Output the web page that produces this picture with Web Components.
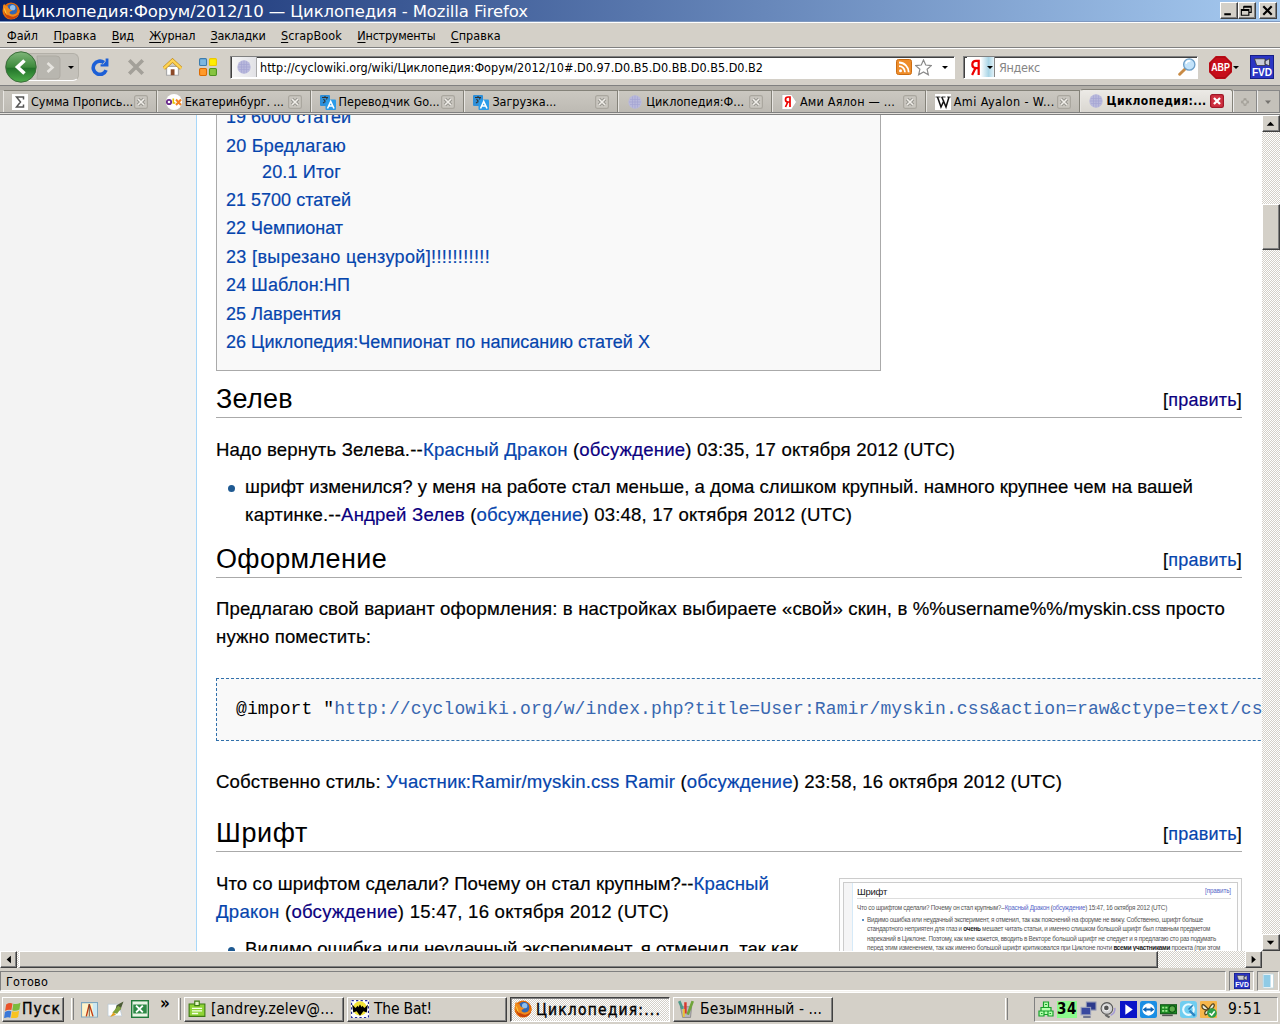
<!DOCTYPE html>
<html lang="ru">
<head>
<meta charset="utf-8">
<title>Циклопедия:Форум/2012/10 — Циклопедия</title>
<style>
  body {
    margin: 0;
    width: 1280px;
    height: 1024px;
    overflow: hidden;
    background: #d4d0c8;
    font: 12.5px "DejaVu Sans Condensed", "DejaVu Sans", "Noto Sans", sans-serif;
    color: #000;
  }
</style>
</head>
<body>
<browser-window>
  <title-bar slot="title"></title-bar>
  <menu-bar slot="menu"></menu-bar>
  <nav-bar slot="nav"></nav-bar>
  <tab-strip slot="tabs">
    <browser-tab icon="sigma" w="102">Сумма Пропись...</browser-tab>
    <browser-tab icon="olx" w="99">Екатеринбург. ...</browser-tab>
    <browser-tab icon="translate" w="101">Переводчик Go...</browser-tab>
    <browser-tab icon="translate" w="64">Загрузка...</browser-tab>
    <browser-tab icon="globe" w="98">Циклопедия:Ф...</browser-tab>
    <browser-tab icon="yandex" w="95">Ами Аялон — ...</browser-tab>
    <browser-tab icon="wiki" w="101">Ami Ayalon - W...</browser-tab>
    <browser-tab icon="globe" w="100" active>Циклопедия:...</browser-tab>
  </tab-strip>
  <wiki-page slot="page"></wiki-page>
  <status-bar slot="status"></status-bar>
</browser-window>
<task-bar></task-bar>

<script>
const ICONS = {
  firefox: `<circle cx="8" cy="8" r="7.6" fill="#e66a00"/><circle cx="8.6" cy="6.6" r="5" fill="#3367b4"/><circle cx="9.5" cy="5" r="2.4" fill="#8fc0ee"/><path d="M1 3C0 10 4 15.4 9 15.2 13 15 16 12 15.6 6.500 14.500 10 12 11.500 9 11 6.500 10.500 6 9 8 8.200L9.400 7.400C7 7 5 5.500 5 3.500 3.600 4 2.500 3.500 2 1.500Z" fill="#f08a1c"/><path d="M2 6C3 10 6 13 10 13 13 12.700 15 11 15.500 8 15.500 12 12 15.400 8 15.200 4 15 1.500 11 2 6Z" fill="#c8420a"/><path d="M2 5C4 8 3 10 6 12 3 11 1.600 8 2 5Z" fill="#ffd33c"/>`,
  reload: `<path d="M13.400 10.800A5.900 5.900 0 1 1 11.500 4" fill="none" stroke="#1c5fd6" stroke-width="3.200"/><path d="M8.500 7.500H15.500V.5H13V3L11 5.500H8.500Z" fill="#1c5fd6"/>`,
  stop: `<path d="M2 2L14 14M14 2L2 14" stroke="#a3a099" stroke-width="3.200"/>`,
  home: `<path d="M3 7H13V14.500H3Z" fill="#fff" stroke="#a9a9a9"/><path d="M.7 8.800L8 2 15.300 8.800" fill="none" stroke="#c08a18" stroke-width="3"/><path d="M.7 8.800L8 2 15.300 8.800" fill="none" stroke="#ffd452" stroke-width="2.100"/><path d="M6.500 9.500H9.700V14.500H6.500Z" fill="#8c4a28"/>`,
  blocks: `<g stroke-width="1"><rect x=".5" y=".5" width="6.200" height="6.200" rx="1" fill="#7db7e0" stroke="#3c7cae"/><rect x="9.300" y=".5" width="6.200" height="6.200" rx="1" fill="#ffee00" stroke="#ecc800"/><rect x=".5" y="9.300" width="6.200" height="6.200" rx="1" fill="#ff9a2a" stroke="#dd6b00"/><rect x="9.300" y="9.300" width="6.200" height="6.200" rx="1" fill="#86c440" stroke="#4e9320"/></g>`,
  globe: `<circle cx="8" cy="8" r="6.700" fill="#b9b9dc"/><path d="M3 5.500H13M2 8H14M3 10.500H13M5.500 2.500V13.500M8 1.500V14.500M10.500 2.500V13.500" stroke="#a5a5d2" stroke-width=".7"/>`,
  rss: `<rect x=".5" y=".5" width="15" height="15" rx="2" fill="#ee8d2b" stroke="#cc6d12"/><circle cx="4.500" cy="11.700" r="1.500" fill="#fff"/><path d="M3 7.200A6 6 0 0 1 9 13.200M3 3.500A9.700 9.700 0 0 1 12.700 13.200" fill="none" stroke="#fff" stroke-width="1.800"/>`,
  star: `<path d="M8 .9L10.100 5.700 15.400 6.200 11.400 9.700 12.600 14.900 8 12.200 3.400 14.900 4.600 9.700 .6 6.200 5.900 5.700Z" fill="#fff" stroke="#8a8a8a" stroke-width="1.100"/>`,
  lens: `<path d="M1.500 14.500L6.500 9.500" stroke="#c98b45" stroke-width="2.600" stroke-linecap="round"/><circle cx="10" cy="5.800" r="5" fill="#c3e3fa" stroke="#6d9fc8" stroke-width="1.200"/><path d="M7 5A3.500 3.500 0 0 1 11 2.700" fill="none" stroke="#fff" stroke-width="1.500"/>`,
  abp: `<path d="M4.700 0H11.300L16 4.700V11.300L11.300 16H4.700L0 11.300V4.700Z" fill="#c70d1a"/><path d="M5 .8H11L15.200 5V11L11 15.200H5L.8 11V5Z" fill="none" stroke="#8d0a10" stroke-width=".5"/><text x="8" y="10.600" font-size="7" font-weight="700" text-anchor="middle" fill="#fff" textLength="13" lengthAdjust="spacingAndGlyphs">ABP</text>`,
  fvd: `<rect width="16" height="16" fill="#2b35c4"/><rect x=".3" y=".3" width="15.400" height="15.400" fill="none" stroke="#151c80" stroke-width=".6"/><path d="M3 2.500H10V7H4.500ZM10 4L13 2.500V7.300L10 6Z" fill="#c9cbd6" stroke="#333" stroke-width=".5"/><text x="8" y="14.300" font-size="7" font-weight="700" text-anchor="middle" fill="#fff" textLength="13.500" lengthAdjust="spacingAndGlyphs">FVD</text>`,
  sigma: `<rect width="16" height="16" fill="#fff"/><path d="M11.500 5.500V3H4.500L8.500 8 4.500 13H11.500V10.500" fill="none" stroke="#555" stroke-width="1.500"/>`,
  olx: `<circle cx="8" cy="8" r="8" fill="#fff"/><circle cx="3" cy="8" r="2.200" fill="none" stroke="#6a2a8c" stroke-width="1.800"/><path d="M7.300 4.500V9H9.300" fill="none" stroke="#e8c400" stroke-width="1.600"/><path d="M10 5.500L15 11M15 5.500L10 11" stroke="#f58220" stroke-width="2"/>`,
  translate: `<rect x="0" y="1" width="10" height="11" rx="1" fill="#2f8fd8"/><path d="M2 3.500H8M5 2V3.500M3 9Q7 7 7 3.500M3.500 5Q5 8 8 9" stroke="#333" stroke-width="1.100" fill="none"/><rect x="5.500" y="5.500" width="10.500" height="10.500" rx="1" fill="#2a9be8"/><path d="M7.500 14.500L10.700 7.500 14 14.500M8.800 12H12.700" stroke="#fff" stroke-width="1.600" fill="none"/>`,
  yandex: `<path d="M1 .5H10.500L15.500 8 10.500 15.500H1Z" fill="#fff" stroke="#b5b5b5" stroke-width=".7"/><path d="M9 13V3H7Q4.500 3 4.500 5.700 4.500 8 7 8H9M6.800 8L4.500 13" fill="none" stroke="#e00" stroke-width="1.700"/>`,
  ya: `<path d="M11 15V1.700H8.500Q5 1.700 5 5.400 5 8.500 8.500 8.500H11M8 8.500L4.800 15" fill="none" stroke="#e00" stroke-width="2.100"/>`,
  wiki: `<rect width="16" height="16" fill="#fff"/><path d="M.5 3H5.500M6.500 3H10.500M12 3H15.800" stroke="#111" stroke-width=".8"/><path d="M2.500 3L6 13 9 6.500M6.800 3L11 13 14 3" fill="none" stroke="#111" stroke-width="1.500"/>`,
  close: `<rect x=".7" y=".7" width="14.600" height="14.600" rx="2" fill="#c9c6bf" stroke="#aaa79f" stroke-width="1.400"/><path d="M4.500 4.500L11.500 11.500M11.500 4.500L4.500 11.500" stroke="#989690" stroke-width="4"/><path d="M4.500 4.500L11.500 11.500M11.500 4.500L4.500 11.500" stroke="#f0eee9" stroke-width="1.800"/>`,
  closered: `<rect x=".7" y=".7" width="14.600" height="14.600" rx="2" fill="#d03040" stroke="#a01828" stroke-width="1.400"/><path d="M4.500 4.500L11.500 11.500M11.500 4.500L4.500 11.500" stroke="#fff" stroke-width="2.600"/>`,
  windows: `<g transform="skewY(-8) translate(0 1.500)"><path d="M2 2Q5 .5 8 2L7 8Q4 6.500 1 8Z" fill="#e9532a"/><path d="M8.800 2.300Q12 3.800 15.500 2.300L14.500 8.500Q11 10 7.800 8.300Z" fill="#7bbb3c"/><path d="M.9 9Q4 7.500 6.900 9L5.900 15Q3 13.500 0 15Z" fill="#3b78d8"/><path d="M7.600 9.300Q11 11 14.300 9.500L13.300 15.500Q10 17 6.600 15.300Z" fill="#f8c320"/></g>`,
  arrows: `<path d="M.5 1.500H15.500V15H.5Z" fill="#fff3c8" stroke="#7ea6bf"/><path d="M11 2H15V14.500H11Z" fill="#cbe8f4"/><path d="M7.800 3L5 14.500M7.800 3L11.300 14.500" stroke="#c23b14" stroke-width="1.300" fill="none"/><path d="M7.800 3V14.500" stroke="#444" stroke-width=".8"/>`,
  brush: `<path d="M1 3H11L14 14H1Z" fill="#fff" stroke="#b3c7d8" stroke-width=".6"/><path d="M15.500 .5L9 4 7.500 10 12.500 8.500Z" fill="#4b5a35"/><path d="M10.500 4.500L5 11 9.500 12 13.500 6.500Z" fill="#7da03c"/><path d="M6 10.500L3 15 8.500 13Z" fill="#e0a020"/>`,
  excel: `<rect x=".6" y=".6" width="14.800" height="14.800" fill="#e8f4e4" stroke="#1f7a3a" stroke-width="1.300"/><path d="M2 4H14V12H2Z" fill="#2d8a46"/><path d="M4.500 5L10.500 11M10.500 5L4.500 11" stroke="#fff" stroke-width="1.700"/>`,
  note: `<path d="M1 3.500H15V14.500H1Z" fill="#8fd436" stroke="#3c7a12"/><path d="M6 1H10V5H6Z" fill="#e7f7c8" stroke="#3c7a12"/><path d="M3.500 7.500H12.500M3.500 9.700H12.500M3.500 12H9" stroke="#f8ffea" stroke-width="1.200"/>`,
  bat: `<rect width="16" height="16" fill="#fff"/><rect x=".5" y=".5" width="15" height="15" fill="none" stroke="#222c9a" stroke-dasharray="2 2"/><circle cx="8" cy="7.500" r="6.300" fill="#f2e33a"/><path d="M1 4L4 7 6 5 7 6.500 7.500 4 8 5 8.500 4 9 6.500 10 5 12 7 15 4 14 11 11 10 8 14 5 10 2 11Z" fill="#000"/>`,
  paint: `<path d="M3 6H13L12 15.500H5Z" fill="#b8b5c0" stroke="#777" stroke-width=".6"/><path d="M5 8L2 1" stroke="#4a9a8a" stroke-width="2.400"/><path d="M7.500 12V2" stroke="#d8392f" stroke-width="2.200"/><path d="M9.500 13L14 1" stroke="#6fa43a" stroke-width="2.400"/><path d="M6 15L6 8" stroke="#e8c636" stroke-width="1.800"/>`,
  clover: `<path d="M5.500 1H10.500V6.500H5.500ZM3 6.500H13V10H3ZM1 10H6V15H1ZM6 10H10V13.500H6ZM10 10H15V15H10Z" fill="#b6ffae" stroke="#17a02a" stroke-width="1.200"/><path d="M7 3.500H9M3 12.500H4.500M11.500 12.500H13" stroke="#17a02a"/>`,
  network: `<rect x="6" y="1" width="9" height="7.500" fill="#2c3a8c" stroke="#8c93b3"/><rect x="1" y="6" width="9" height="7" fill="#39499f" stroke="#9aa0bd"/><path d="M3 15H10" stroke="#6f7590" stroke-width="2"/>`,
  speaker: `<circle cx="6.500" cy="7" r="5.500" fill="#d0d0d0" stroke="#555"/><circle cx="6" cy="6.500" r="2.700" fill="#555" stroke="#eee"/><path d="M10 13.500Q14.500 11.500 14 6.500" stroke="#a59bd6" fill="none" stroke-width="1.500"/><path d="M5 13L9 15.500" stroke="#666" stroke-width="2"/>`,
  play: `<rect width="16" height="16" fill="#0a14c8"/><path d="M5 3L12 8 5 13Z" fill="#fff"/>`,
  teamviewer: `<rect width="16" height="16" rx="2" fill="#1b8ee4"/><circle cx="8" cy="8" r="5.800" fill="#fff"/><path d="M2.500 8L6 5.300V7H10V5.300L13.500 8 10 10.700V9H6V10.700Z" fill="#0d62b5"/>`,
  card: `<path d="M0 3.500H16V12H0Z" fill="#1c8b22" stroke="#0a4e10"/><path d="M2 5.500H4V7H2ZM5 5.500H7V7H5ZM2 8.500H4V10H2ZM5 8.500H7V10H5Z" fill="#a0e890"/><path d="M2 13.500H12" stroke="#555" stroke-width="1.500"/><circle cx="11.500" cy="7.500" r="3" fill="#5fae4d" stroke="#0a4e10"/>`,
  quicktime: `<rect width="16" height="16" rx="3" fill="#6fcdf0"/><circle cx="8" cy="8" r="5" fill="none" stroke="#eafaff" stroke-width="2"/><path d="M9 9L14 14" stroke="#2e86c4" stroke-width="2.300"/><path d="M8 8L12 4" stroke="#287bb4" stroke-width="1.500"/>`,
  butterfly: `<rect width="16" height="16" rx="1" fill="#f6b64a"/><path d="M8 8Q1 0 2 6 3 9 8 8Q12 0 13.500 4 13 8 8 8Q3 10 5 13 8 13 8 8" fill="#e8efe0" stroke="#544319" stroke-width="1.200"/><circle cx="11.300" cy="11.300" r="4.500" fill="#2ca04a"/><path d="M9 11.500L11 13.300 13.800 9.600" stroke="#fff" stroke-width="1.500" fill="none"/>`,
  page: `<path d="M3 1H13.500V15H3Z" fill="#fff" stroke="#bcd4dc" stroke-width=".8"/><path d="M3.500 2H10.500V14H3.500Z" fill="#8fcbe6"/>`,
  up: `<path d="M4 10.500L8 6 12 10.500Z"/>`,
  down: `<path d="M4 6L8 10.500 12 6Z"/>`,
  left: `<path d="M10.500 4L6 8 10.500 12Z"/>`,
  right: `<path d="M6 4L10.500 8 6 12Z"/>`,
  min: `<path d="M3.500 12H10.500" stroke="#000" stroke-width="2.200"/>`,
  restore: `<path d="M5 3.500H13V10H11M5 3.500V6M5 4.500H13M2.500 7H10.500V13H2.500ZM2.500 8H10.500" fill="none" stroke="#000" stroke-width="1.200"/>`,
  exit: `<path d="M3.500 3.500L12.500 12.500M12.500 3.500L3.500 12.500" stroke="#000" stroke-width="2.300"/>`,
  plus: `<path d="M8 4V12M4 8H12" stroke="#8b8880" stroke-width="3"/><path d="M8 5V11M5 8H11" stroke="#dedbd4" stroke-width="1.200"/>`,
};

const BEVEL = `
  box-sizing: border-box;
  background: #d4d0c8;
  border: 1px solid;
  border-color: #fff #404040 #404040 #fff;
  box-shadow: inset -1px -1px #808080;
`;
const DITHER = "background: repeating-conic-gradient(#fff 0 25%, #d4d0c8 0 50%) 0 0 / 2px 2px;";

class ShadowElement extends HTMLElement {
  connectedCallback() {
    if (this.shadowRoot) return;
    this.attachShadow({ mode: "open" });
    this.shadowRoot.innerHTML = this.render();
  }
}

class PixIcon extends ShadowElement {
  render() {
    const size = this.getAttribute("size") || 16;
    return `
      <style>
        :host { display: block; flex: none; width: ${size}px; height: ${size}px; }
        svg { display: block; }
        text { font-family: "Liberation Sans", sans-serif; }
      </style>
      <svg width="${size}" height="${size}" viewBox="0 0 16 16">${ICONS[this.getAttribute("name")]}</svg>
    `;
  }
}

// one line of text, spaced out to take exactly w pixels
class FitText extends ShadowElement {
  connectedCallback() {
    super.connectedCallback();
    const w = Number(this.getAttribute("w"));
    const nodes = this.shadowRoot.querySelector("slot").assignedNodes({ flatten: true });
    const count = nodes.map((n) => n.textContent).join("").length;
    this.style.width = "max-content";
    const natural = this.getBoundingClientRect().width;
    this.style.letterSpacing = (w - natural) / count + "px";
    this.style.width = w + "px";
  }

  render() {
    return `<style>:host { display: inline-block; white-space: pre; flex: none; }</style><slot></slot>`;
  }
}

class BrowserWindow extends ShadowElement {
  render() {
    return `
      <style>
        :host { display: flex; flex-direction: column; height: 992px; }
      </style>
      <slot name="title"></slot>
      <slot name="menu"></slot>
      <slot name="nav"></slot>
      <slot name="tabs"></slot>
      <slot name="page"></slot>
      <slot name="status"></slot>
    `;
  }
}

class TitleBar extends ShadowElement {
  render() {
    return `
      <style>
        :host {
          display: flex; align-items: center; height: 22px; box-sizing: border-box;
          padding: 0 3px 0 2px; color: #fff; font-family: "DejaVu Sans", sans-serif; font-size: 16.500px;
          background: linear-gradient(90deg, #0a246a, #a6caf0);
          border-bottom: 1px solid #8099c0;
        }
        fit-text { margin-left: 2px; line-height: 20px; padding-top: 2px; }
        .buttons { display: flex; margin-left: auto; }
        .buttons div { width: 18px; height: 17px; ${BEVEL} }
        .buttons div:last-child { margin-left: 3px; }
      </style>
      <pix-icon name="firefox" size="18"></pix-icon>
      <fit-text w="506">Циклопедия:Форум/2012/10 — Циклопедия - Mozilla Firefox</fit-text>
      <div class="buttons">
        <div><pix-icon name="min" size="15"></pix-icon></div>
        <div><pix-icon name="restore" size="15"></pix-icon></div>
        <div><pix-icon name="exit" size="15"></pix-icon></div>
      </div>
    `;
  }
}

class MenuBar extends ShadowElement {
  render() {
    const items = [["Файл", 31], ["Правка", 43], ["Вид", 22], ["Журнал", 46], ["Закладки", 55], ["ScrapBook", 61], ["Инструменты", 78], ["Справка", 50]];
    return `
      <style>
        :host {
          display: flex; align-items: center; gap: 15.400px; height: 26px; box-sizing: border-box;
          padding-left: 7px; border-top: 1px solid #fff; border-bottom: 1px solid #808080;
        }
        u { text-underline-offset: 2px; text-decoration-thickness: 1px; }
      </style>
      ${items.map(([t, w]) => `<fit-text w="${w}"><u>${t[0]}</u>${t.slice(1)}</fit-text>`).join("")}
    `;
  }
}

class NavBar extends ShadowElement {
  render() {
    return `
      <style>
        :host {
          display: flex; align-items: center; height: 38px; box-sizing: border-box;
          border-top: 1px solid #fff; border-bottom: 1px solid #808080; padding-left: 5px;
        }
        .history {
          display: flex; align-items: center; width: 74px; height: 28px; box-sizing: border-box;
          background: #c4c1ba; border-radius: 14px 6px 6px 14px;
          border: 1px solid #b3b0a8; border-bottom-color: #fff; margin-right: 12px;
        }
        .back { flex: none; margin-left: -1px; }
        .fwd { flex: none; margin-left: -3px; }
        .arrow { border: 3px solid transparent; border-top: 3px solid #000; border-bottom: 0; flex: none; }
        .history .arrow { margin-left: 7px; }
        .field {
          display: flex; align-items: center; height: 23px; box-sizing: border-box; background: #fff;
          border: 1px solid; border-color: #808080 #fff #fff #808080; box-shadow: inset 1px 1px #404040;
        }
        .url { width: 725px; margin-left: 13px; padding-left: 1px; }
        .ident {
          display: flex; align-items: center; padding: 0 4px; height: 20px;
          background: linear-gradient(90deg, #f6f6f6, #e2e2e6); border-right: 1px solid #aaa; margin-right: 3px;
        }
        .url .arrow { margin: 0 6px 0 auto; }
        .rss { margin-left: 133px; margin-right: 3px; }
        .search { width: 235px; margin-left: 8px; padding-left: 3px; color: #858585; }
        .engine { display: flex; align-items: center; height: 20px; width: 27px; border-right: 1px solid #888; background: linear-gradient(90deg, #fff 50%, #a9d5e6 80%, #e3f2f8); margin-right: 4px; }
        .search > pix-icon { margin: 0 1px 0 auto; }
        .abp { margin: 0 1px 0 11px; }
        .fvd { margin-left: 11px; }
      </style>
      <div class="history">
        <svg class="back" width="32" height="32" viewBox="0 0 32 32">
          <defs><linearGradient id="g" x1="0" y1="0" x2="0" y2="1"><stop offset="0" stop-color="#7fb67a"/><stop offset=".5" stop-color="#3d8a3c"/><stop offset=".55" stop-color="#23742a"/><stop offset="1" stop-color="#4fae4c"/></linearGradient></defs>
          <circle cx="16" cy="16" r="15.200" fill="url(#g)" stroke="#3c6e3b"/>
          <path d="M19.500 9.500L12.500 16 19.500 22.500" fill="none" stroke="#fff" stroke-width="3.600"/>
        </svg>
        <svg class="fwd" width="27" height="25" viewBox="0 0 27 25">
          <path d="M3 1H22Q26 1 26 4V21Q26 24 22 24H3Q5 12 3 1Z" fill="#b8b6af" stroke="#aeaba3"/>
          <path d="M13.500 8L18.500 12.500 13.500 17" fill="none" stroke="#e6e4df" stroke-width="2.600"/>
        </svg>
        <div class="arrow"></div>
      </div>
      <pix-icon name="reload" size="18"></pix-icon>
      <pix-icon name="stop" size="18" style="margin-left: 18px"></pix-icon>
      <pix-icon name="home" size="19" style="margin-left: 18px"></pix-icon>
      <pix-icon name="blocks" size="18" style="margin-left: 17px"></pix-icon>
      <div class="field url">
        <div class="ident"><pix-icon name="globe" size="16"></pix-icon></div>
        <fit-text w="503">http://cyclowiki.org/wiki/Циклопедия:Форум/2012/10#.D0.97.D0.B5.D0.BB.D0.B5.D0.B2</fit-text>
        <pix-icon class="rss" name="rss"></pix-icon>
        <pix-icon name="star" size="17"></pix-icon>
        <div class="arrow"></div>
      </div>
      <div class="field search">
        <div class="engine"><pix-icon name="ya" size="17"></pix-icon><div class="arrow" style="margin-left: 3px"></div></div>
        <fit-text w="41">Яндекс</fit-text>
        <pix-icon name="lens" size="18"></pix-icon>
      </div>
      <pix-icon class="abp" name="abp" size="23"></pix-icon>
      <div class="arrow"></div>
      <pix-icon class="fvd" name="fvd" size="24"></pix-icon>
    `;
  }
}

class TabStrip extends ShadowElement {
  render() {
    return `
      <style>
        :host {
          display: flex; align-items: flex-end; height: 29px; box-sizing: border-box;
          padding: 0 0 2px 3px; background: linear-gradient(#b1aea7 4px, #bbb8b1 4px);
          border-bottom: 1px solid #808080; box-shadow: inset 0 -1px #e4e1dc, inset 0 -2px #808080;
          overflow: hidden;
        }
        div {
          display: flex; align-items: center; justify-content: center; width: 30px; height: 22px; box-sizing: border-box;
          background: #c4c1ba; border-left: 1px solid #eee; border-top: 1px solid #888; border-right: 1px solid #888;
        }
      </style>
      <slot></slot>
      <div><pix-icon name="plus" size="14"></pix-icon></div>
      <div><pix-icon name="down" size="12" style="opacity: .4"></pix-icon></div>
    `;
  }
}

class BrowserTab extends ShadowElement {
  render() {
    const active = this.hasAttribute("active");
    return `
      <style>
        :host {
          display: flex; align-items: center; flex: none; width: 153.800px; height: 22px; box-sizing: border-box;
          padding-left: 8px; background: linear-gradient(#cbc8c1, #bdbab3);
          border-top: 1px solid #848279; border-left: 1px solid #e8e6e2; border-right: 1px solid #848279;
        }
        :host([active]) { height: 23px; background: linear-gradient(#eceae6, #dad7d1); font-weight: bold; border-radius: 3px 3px 0 0; font-size: 12px; padding-left: 7px; }
        fit-text { margin-left: 3px; }
        .close { margin: 0 8px 0 auto; }
      </style>
      <pix-icon name="${this.getAttribute("icon")}"></pix-icon>
      <fit-text w="${this.getAttribute("w")}"><slot></slot></fit-text>
      <pix-icon class="close" name="${active ? "closered" : "close"}" size="14"></pix-icon>
    `;
  }
}

class WikiHeading extends ShadowElement {
  render() {
    return `
      <style>
        :host {
          display: flex; align-items: flex-end; justify-content: space-between; font-size: 18px;
          width: 1026px; height: 37px; box-sizing: border-box; border-bottom: 1px solid #aaa;
        }
        .text { font-size: 27px; line-height: 36px; -webkit-text-stroke: 0; }
        .edit { line-height: 28px; padding-bottom: 3.500px; }
        a { color: ${this.hasAttribute("visited") ? "#0b0080" : "#0645ad"}; }
      </style>
      <fit-text class="text" w="${this.getAttribute("w")}"><slot></slot></fit-text>
      <fit-text class="edit" w="79">[<a>править</a>]</fit-text>
    `;
  }
}

class WikiToc extends ShadowElement {
  render() {
    const rows = [["19 6000 статей", 125], ["20 Бредлагаю", 120], ["20.1 Итог", 79, true], ["21 5700 статей", 125], ["22 Чемпионат", 117], ["23 [вырезано цензурой]!!!!!!!!!!!", 264], ["24 Шаблон:НП", 124], ["25 Лаврентия", 115], ["26 Циклопедия:Чемпионат по написанию статей X", 424]];
    return `
      <style>
        :host {
          display: flex; flex-direction: column; width: 665px; box-sizing: border-box; height: 283px; font-size: 18px;
          margin-top: -27px; padding: 14.200px 0 0 9px; background: #f9f9f9; border: 1px solid #aaa; color: #0645ad;
        }
        div { height: 28.400px; line-height: 28.400px; }
        .sub { padding-left: 36px; height: 26px; line-height: 25px; }
      </style>
      ${rows.map(([t, w, sub]) => `<div class="${sub ? "sub" : ""}"><fit-text w="${w}">${t}</fit-text></div>`).join("")}
    `;
  }
}

class WikiThumb extends ShadowElement {
  render() {
    return `
      <style>
        :host {
          display: block; flex: none; width: 403px; height: 110px; box-sizing: border-box;
          padding: 3px; background: #fdfdfd; border: 1px solid #ccc;
          font-size: 6.300px; line-height: 9.400px; color: #555; -webkit-text-stroke: 0;
        }
        .shot { display: flex; box-sizing: border-box; height: 110px; border: 1px solid #ccc; background: #fff; }
        .side { flex: none; width: 8px; background: #f5f5f6; border-right: 1px solid #d6eaf8; }
        .main { padding: 3px 0 0 4px; }
        .head { display: flex; justify-content: space-between; width: 374px; height: 12px; border-bottom: 1px solid #ddd; }
        .head fit-text:first-child { font-size: 9.500px; color: #222; line-height: 11px; }
        .line { margin: 4px 0 2.500px; height: 9.400px; line-height: 9.400px; }
        .line fit-text { display: block; }
        .list { display: flex; flex-direction: column; padding-left: 10px; }
        .bullet { display: flex; align-items: center; gap: 3px; margin-left: -5px; }
        .bullet::before { content: ""; width: 2px; height: 2px; background: #2a6db0; border-radius: 1px; }
        .list fit-text { height: 9.400px; }
        a { color: #5566c8; }
        b { color: #222; }
      </style>
      <div class="shot">
        <div class="side"></div>
        <div class="main">
          <div class="head"><fit-text w="30">Шрифт</fit-text><fit-text w="26"><a>[править]</a></fit-text></div>
          <div class="line"><fit-text w="310">Что со шрифтом сделали? Почему он стал крупным?--<a>Красный Дракон</a> (<a>обсуждение</a>) 15:47, 16 октября 2012 (UTC)</fit-text></div>
          <div class="list">
            <div class="bullet"><fit-text w="336">Видимо ошибка или неудачный эксперимент, я отменил, так как пояснений на форуме не вижу. Собственно, шрифт больше</fit-text></div>
            <fit-text w="343">стандартного неприятен для глаз и <b>очень</b> мешает читать статьи, и именно слишком большой шрифт был главным предметом</fit-text>
            <fit-text w="349">нареканий в Циклоне. Поэтому, как мне кажется, вводить в Векторе большой шрифт не следует и я предлагаю сто раз подумать</fit-text>
            <fit-text w="353">перед этим изменением, так как именно большой шрифт критиковался при Циклоне почти <b>всеми участниками</b> проекта (при этом</fit-text>
          </div>
        </div>
      </div>
    `;
  }
}

class ScrollBar extends ShadowElement {
  render() {
    const vertical = this.hasAttribute("vertical");
    const before = this.getAttribute("before");
    const thumb = this.getAttribute("thumb");
    return `
      <style>
        :host { display: flex; flex: none; flex-direction: ${vertical ? "column" : "row"}; ${DITHER} }
        div { ${BEVEL} flex: none; width: 17px; height: 17px; ${vertical ? "width: 18px;" : ""} }
        .thumb { ${vertical ? `margin-top: ${before}px; height: ${thumb}px` : `margin-left: ${before}px; width: ${thumb}px`}; }
        .end { ${vertical ? "margin-top" : "margin-left"}: auto; }
      </style>
      <div><pix-icon name="${vertical ? "up" : "left"}" size="15"></pix-icon></div>
      <div class="thumb"></div>
      <div class="end"><pix-icon name="${vertical ? "down" : "right"}" size="15"></pix-icon></div>
    `;
  }
}

class WikiPage extends ShadowElement {
  render() {
    return `
      <style>
        :host { display: grid; grid-template: 836px 17px / 1262px 18px; }
        .view {
          display: flex; overflow: hidden; background: #fff; -webkit-text-stroke: .2px;
          font-family: "Liberation Sans", Arial, sans-serif; font-size: 18.600px; line-height: 28px;
        }
        .side { flex: none; width: 196px; background: #f3f3f3; border-right: 1px solid #a7d7f9; }
        .content { flex: none; width: 1046px; padding-left: 19px; }
        p { margin: 0; height: 28px; }
        p fit-text, li fit-text { display: block; }
        ul { margin: 9px 0 0; padding: 0 0 0 29px; list-style: none; }
        li { display: grid; grid-template-columns: 17px auto; margin-left: -17px; }
        li::before { content: ""; width: 7px; height: 7px; border-radius: 50%; background: #1f5a92; margin-top: 12px; }
        a { color: #0645ad; }
        .v { color: #0b0080; }
        .code {
          height: 63px; width: 1200px; box-sizing: border-box; margin: 27px 0; padding-left: 19px;
          border: 1px dashed #2f6fab; background: #f9f9f9; font-family: "Liberation Mono", monospace; font-size: 18px;
          line-height: 61px; white-space: pre; letter-spacing: .12px; -webkit-text-stroke: 0;
        }
        .code a { color: #3a68b0; }
        .row { display: flex; justify-content: space-between; width: 1026px; }
        .row > div { padding-top: 18px; }
        .row wiki-thumb { margin-top: 26px; }
      </style>
      <div class="view">
        <div class="side"></div>
        <div class="content">
          <wiki-toc></wiki-toc>
          <wiki-heading w="77" visited style="margin-top: 10px">Зелев</wiki-heading>
          <p style="margin-top: 18px"><fit-text w="739">Надо вернуть Зелева.--<a>Красный Дракон</a> (<a class="v">обсуждение</a>) 03:35, 17 октября 2012 (UTC)</fit-text></p>
          <ul><li><div>
            <fit-text w="948">шрифт изменился? у меня на работе стал меньше, а дома слишком крупный. намного крупнее чем на вашей</fit-text>
            <fit-text w="607">картинке.--<a class="v">Андрей Зелев</a> (<a>обсуждение</a>) 03:48, 17 октября 2012 (UTC)</fit-text>
          </div></li></ul>
          <wiki-heading w="171" style="margin-top: 12px">Оформление</wiki-heading>
          <p style="margin-top: 17px"><fit-text w="1009">Предлагаю свой вариант оформления: в настройках выбираете «свой» скин, в %%username%%/myskin.css просто</fit-text></p>
          <p><fit-text w="155">нужно поместить:</fit-text></p>
          <div class="code">@import "<a>http://cyclowiki.org/w/index.php?title=User:Ramir/myskin.css&amp;action=raw&amp;ctype=text/css</a></div>
          <p><fit-text w="846">Собственно стиль: <a>Участник:Ramir/myskin.css</a> <a>Ramir</a> (<a>обсуждение</a>) 23:58, 16 октября 2012 (UTC)</fit-text></p>
          <wiki-heading w="92" style="margin-top: 19px">Шрифт</wiki-heading>
          <div class="row">
            <div>
              <p><fit-text w="553">Что со шрифтом сделали? Почему он стал крупным?--<a>Красный</a></fit-text></p>
              <p><fit-text w="453"><a>Дракон</a> (<a class="v">обсуждение</a>) 15:47, 16 октября 2012 (UTC)</fit-text></p>
              <ul><li><fit-text w="553">Видимо ошибка или неудачный эксперимент, я отменил, так как</fit-text></li></ul>
            </div>
            <wiki-thumb></wiki-thumb>
          </div>
        </div>
      </div>
      <scroll-bar vertical before="72" thumb="46"></scroll-bar>
      <scroll-bar before="2" thumb="1139"></scroll-bar>
    `;
  }
}

class StatusBar extends ShadowElement {
  render() {
    return `
      <style>
        :host { display: flex; gap: 3px; height: 24px; box-sizing: border-box; padding: 3px 1px 0 0; border-bottom: 1px solid #f4f2ee; }
        div {
          display: flex; align-items: center; justify-content: center; height: 20px; width: 25px; box-sizing: border-box;
          border: 1px solid; border-color: #808080 #fff #fff #808080;
        }
        .text { flex: 1; justify-content: flex-start; padding-left: 5px; }
      </style>
      <div class="text"><fit-text w="42">Готово</fit-text></div>
      <div><pix-icon name="fvd"></pix-icon></div>
      <div style="width: 22px"><pix-icon name="page"></pix-icon></div>
    `;
  }
}

class TaskButton extends ShadowElement {
  render() {
    return `
      <style>
        :host { ${BEVEL} display: flex; align-items: center; flex: none; width: 160px; height: 25px; padding-left: 3px; }
        :host([pressed]) { ${DITHER} border-color: #404040 #fff #fff #404040; box-shadow: inset 1px 1px #808080; padding-left: 3px; }
        fit-text { margin-left: 5px; }
        :host([pressed]) fit-text { margin: 2px 0 0 4px; -webkit-text-stroke: .4px; }
      </style>
      <pix-icon name="${this.getAttribute("icon")}" size="18"></pix-icon>
      <fit-text w="${this.getAttribute("w")}"><slot></slot></fit-text>
    `;
  }
}

class TaskBar extends ShadowElement {
  render() {
    const tray = ["network", "speaker", "play", "teamviewer", "card", "quicktime", "butterfly"];
    return `
      <style>
        :host {
          display: flex; align-items: center; height: 32px; box-sizing: border-box; padding: 1px 2px 0;
          border-top: 1px solid #fff; font-size: 15.500px;
        }
        .start { ${BEVEL} display: flex; align-items: center; width: 62px; height: 25px; padding-left: 1px; gap: 1px; -webkit-text-stroke: .4px; flex: none; }
        .sep { flex: none; width: 1px; height: 22px; border-left: 1px solid #fff; border-right: 1px solid #808080; }
        .quick { display: flex; align-items: center; gap: 9px; margin-left: 7px; width: 97px; }
        .quick b { font-size: 17px; line-height: 14px; margin: -12px 0 0 2px; }
        .tasks { display: flex; gap: 3px; margin-left: 3px; }
        .tray {
          display: flex; align-items: center; gap: 3px; width: 244px; height: 25px; box-sizing: border-box;
          margin-left: 26px; padding: 0 0 0 3px; border: 1px solid; border-color: #808080 #fff #fff #808080;
        }
        .count { background: #8cfa8c; font: bold 15px/17px "DejaVu Sans Condensed", sans-serif; }
        .clock { margin-left: 8px; }
      </style>
      <div class="start"><pix-icon name="windows" size="17"></pix-icon><fit-text w="39">Пуск</fit-text></div>
      <div class="sep" style="margin-left: 7px"></div>
      <div class="quick">
        <pix-icon name="arrows" size="17"></pix-icon>
        <pix-icon name="brush" size="17"></pix-icon>
        <pix-icon name="excel" size="18" style="margin-left: -2px"></pix-icon>
        <b>»</b>
      </div>
      <div class="sep"></div>
      <div class="tasks">
        <task-button icon="note" w="123">[andrey.zelev@...</task-button>
        <task-button icon="bat" w="58">The Bat!</task-button>
        <task-button icon="firefox" w="125" pressed>Циклопедия:...</task-button>
        <task-button icon="paint" w="122">Безымянный - ...</task-button>
      </div>
      <div class="sep" style="margin-left: auto"></div>
      <div class="tray">
        <pix-icon name="clover"></pix-icon>
        <fit-text class="count" w="20">34</fit-text>
        ${tray.map((n) => `<pix-icon name="${n}" size="17"></pix-icon>`).join("")}
        <fit-text class="clock" w="34">9:51</fit-text>
      </div>
    `;
  }
}

customElements.define("browser-window", BrowserWindow);
customElements.define("title-bar", TitleBar);
customElements.define("menu-bar", MenuBar);
customElements.define("nav-bar", NavBar);
customElements.define("tab-strip", TabStrip);
customElements.define("browser-tab", BrowserTab);
customElements.define("wiki-page", WikiPage);
customElements.define("wiki-toc", WikiToc);
customElements.define("wiki-heading", WikiHeading);
customElements.define("wiki-thumb", WikiThumb);
customElements.define("scroll-bar", ScrollBar);
customElements.define("status-bar", StatusBar);
customElements.define("task-bar", TaskBar);
customElements.define("task-button", TaskButton);
customElements.define("pix-icon", PixIcon);
// last, so that every label already has its final font when it is measured
customElements.define("fit-text", FitText);
</script>
</body>
</html>
